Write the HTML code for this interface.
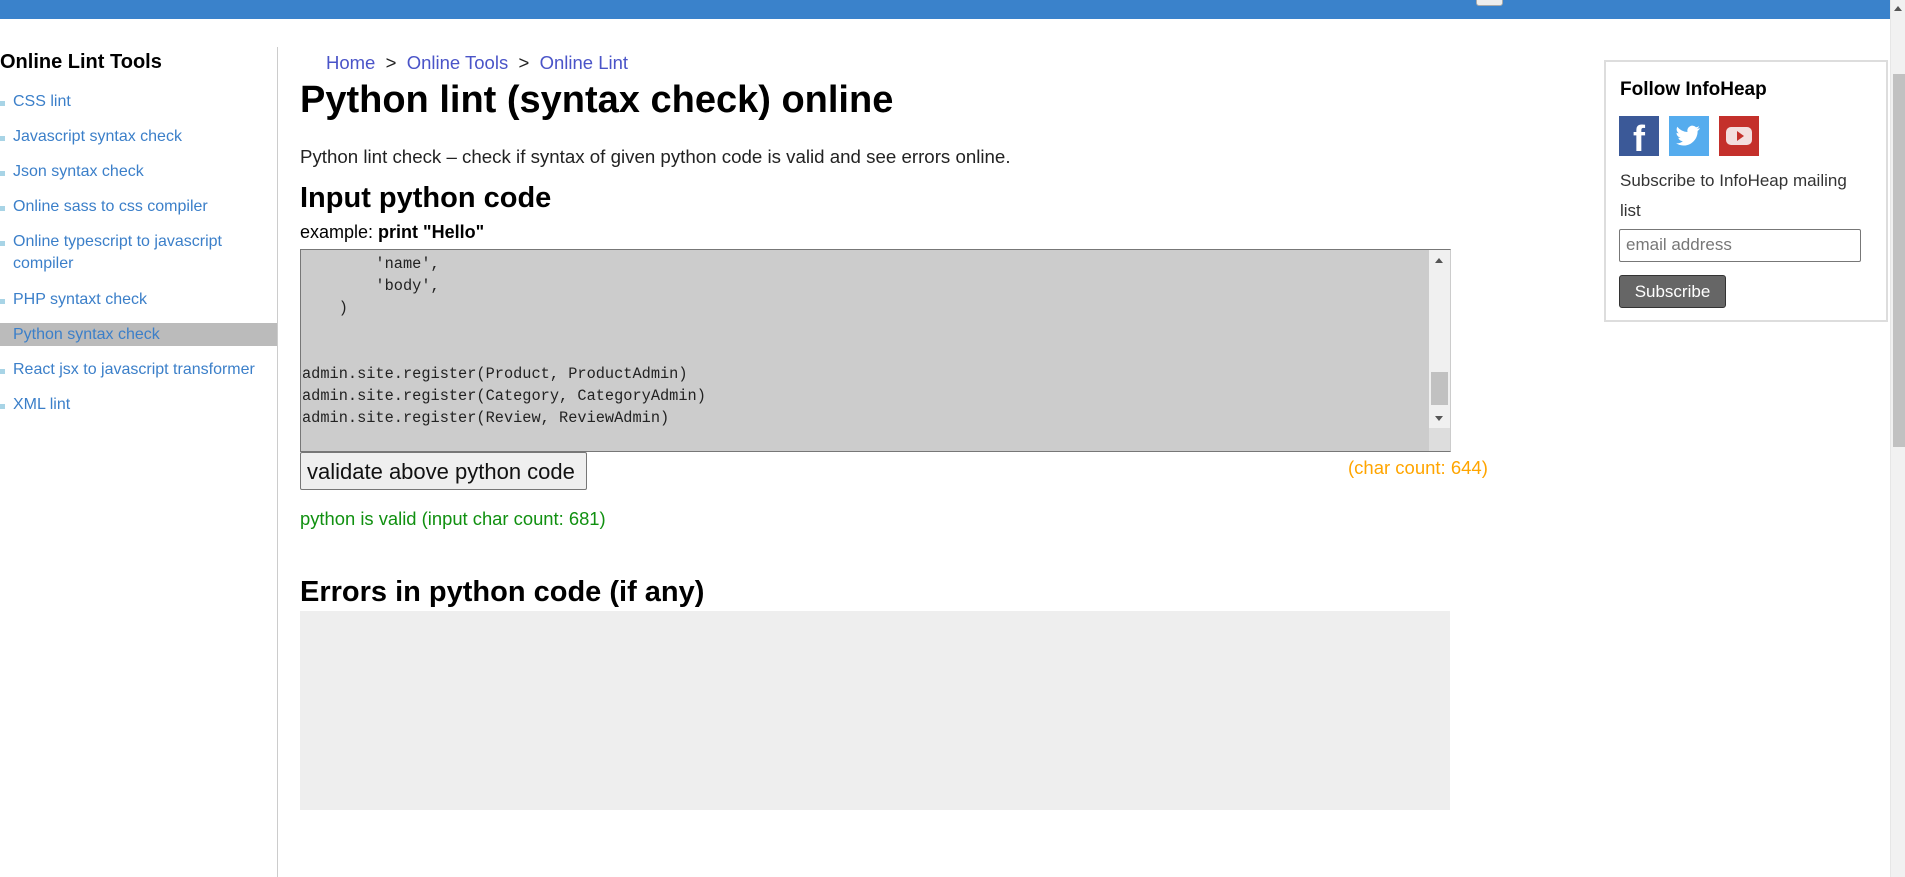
<!DOCTYPE html>
<html><head><meta charset="utf-8"><style>
*{margin:0;padding:0;box-sizing:border-box}
body{width:1905px;height:877px;overflow:hidden;background:#fff;font-family:"Liberation Sans",Arial,sans-serif;position:relative}
.a{position:absolute;white-space:nowrap}
.hdr{left:0;top:0;width:1890px;height:19px;background:#3a82cb}
.hdr span{position:absolute;top:-13px;color:#fff;font-size:16px}
.side{font-size:16px;color:#3b7fc9}
.bul{position:absolute;width:5px;height:5px;background:#a8d4e6}
.mono{font-family:"Liberation Mono","DejaVu Sans Mono",monospace;font-size:15.3px;color:#222}
</style></head><body>
<div class="a hdr"><span style="left:23px">Home</span><span style="left:127px">Tutorials</span><span style="left:245px">Online Tools</span>
<div style="position:absolute;left:1476px;top:-6px;width:27px;height:12px;background:#eee;border-radius:3px;border:1px solid #aaa"></div></div>

<div class="a" style="left:0;top:51px;font-size:20px;font-weight:bold;color:#000">Online Lint Tools</div>
<div class="a" style="left:0;top:323px;width:277px;height:23px;background:#bbb"></div>
<div class="a" style="left:277px;top:47px;width:1px;height:830px;background:#ccc"></div>

<div class="bul" style="left:0;top:101px"></div><div class="a side" style="left:13px;top:93px">CSS lint</div>
<div class="bul" style="left:0;top:136px"></div><div class="a side" style="left:13px;top:128px">Javascript syntax check</div>
<div class="bul" style="left:0;top:171px"></div><div class="a side" style="left:13px;top:163px">Json syntax check</div>
<div class="bul" style="left:0;top:206px"></div><div class="a side" style="left:13px;top:198px">Online sass to css compiler</div>
<div class="bul" style="left:0;top:241px"></div><div class="a side" style="left:13px;top:231px;line-height:22px">Online typescript to javascript<br>compiler</div>
<div class="bul" style="left:0;top:299px"></div><div class="a side" style="left:13px;top:291px">PHP syntaxt check</div>
<div class="a side" style="left:13px;top:326px">Python syntax check</div>
<div class="bul" style="left:0;top:369px"></div><div class="a side" style="left:13px;top:361px">React jsx to javascript transformer</div>
<div class="bul" style="left:0;top:404px"></div><div class="a side" style="left:13px;top:396px">XML lint</div>

<div class="a" style="left:326px;top:52px;font-size:18.5px;color:#4a54c8">Home <span style="color:#222">&nbsp;&gt;&nbsp;</span> Online Tools <span style="color:#222">&nbsp;&gt;&nbsp;</span> Online Lint</div>
<div class="a" style="left:300px;top:79px;font-size:38px;font-weight:bold;color:#000">Python lint (syntax check) online</div>
<div class="a" style="left:300px;top:146px;font-size:18.7px;color:#222">Python lint check – check if syntax of given python code is valid and see errors online.</div>
<div class="a" style="left:300px;top:182px;font-size:29px;font-weight:bold;color:#000">Input python code</div>
<div class="a" style="left:300px;top:222px;font-size:18px;color:#000">example: <b>print "Hello"</b></div>

<div class="a" style="left:300px;top:249px;width:1151px;height:203px;background:#ccc;border:1px solid #777;border-right-color:#ccc;overflow:hidden">
<div class="mono" style="position:absolute;left:1px;top:3px;line-height:22px;white-space:pre">        'name',
        'body',
    )


admin.site.register(Product, ProductAdmin)
admin.site.register(Category, CategoryAdmin)
admin.site.register(Review, ReviewAdmin)</div>
<div style="position:absolute;right:0;top:0;width:21px;height:201px;background:#f0f0f0">
<div style="position:absolute;left:6px;top:8px;border:4px solid transparent;border-bottom:5px solid #555;border-top:0"></div>
<div style="position:absolute;left:2px;top:122px;width:17px;height:33px;background:#c1c1c1"></div>
<div style="position:absolute;left:6px;top:166px;border:4px solid transparent;border-top:5px solid #555;border-bottom:0"></div>
<div style="position:absolute;left:0;top:178px;width:21px;height:23px;background:#ddd"></div>
</div></div>

<div class="a" style="left:300px;top:452px;width:287px;height:38px;background:#efefef;border:1px solid #777;border-radius:2px;font-size:22px;color:#111;padding:6px 0 0 6px">validate above python code</div>
<div class="a" style="left:1348px;top:457px;font-size:18.5px;color:#ffa500">(char count: 644)</div>
<div class="a" style="left:300px;top:508px;font-size:18.4px;color:#109010">python is valid (input char count: 681)</div>
<div class="a" style="left:300px;top:576px;font-size:29px;font-weight:bold;color:#000">Errors in python code (if any)</div>
<div class="a" style="left:300px;top:611px;width:1150px;height:199px;background:#eee"></div>

<div class="a" style="left:1604px;top:60px;width:284px;height:262px;border:2px solid #ddd"></div>
<div class="a" style="left:1620px;top:79px;font-size:19px;font-weight:bold;color:#000">Follow InfoHeap</div>
<div class="a" style="left:1619px;top:116px;width:40px;height:40px;background:#3b5998;color:#fff;font-size:36px;font-weight:bold;text-align:center;line-height:46px">f</div>
<div class="a" style="left:1669px;top:116px;width:40px;height:40px;background:#55acee">
<svg width="40" height="40" viewBox="0 0 40 40"><path d="M31 12c-1 .5-2 .7-3 .8 1-.6 1.8-1.6 2.2-2.7-1 .6-2 1-3.2 1.2A5 5 0 0 0 18.5 16 14 14 0 0 1 8.3 10.8a5 5 0 0 0 1.5 6.6c-.8 0-1.6-.3-2.3-.6 0 2.4 1.7 4.4 4 4.9-.7.2-1.500.2-2.2.1.6 2 2.5 3.4 4.6 3.4A10 10 0 0 1 7 27.3 14 14 0 0 0 28.6 15.5V15c1-.7 1.8-1.6 2.4-3z" fill="#fff"/></svg></div>
<div class="a" style="left:1719px;top:116px;width:40px;height:40px;background:#c4302b">
<div style="position:absolute;left:7px;top:11px;width:26px;height:18px;background:#f3dede;border-radius:5px"></div>
<div style="position:absolute;left:18px;top:15px;border-left:7px solid #c4302b;border-top:5px solid transparent;border-bottom:5px solid transparent"></div></div>
<div class="a" style="left:1620px;top:166px;font-size:17px;color:#333;line-height:30px">Subscribe to InfoHeap mailing<br>list</div>
<div class="a" style="left:1619px;top:229px;width:242px;height:33px;border:1px solid #777;border-radius:2px;font-size:17px;color:#777;padding:5px 0 0 6px">email address</div>
<div class="a" style="left:1619px;top:275px;width:107px;height:33px;background:#666;border:1px solid #333;border-radius:3px;color:#fff;font-size:17px;text-align:center;line-height:31px">Subscribe</div>

<div class="a" style="left:1890px;top:0;width:15px;height:877px;background:#f1f1f1;border-left:1px solid #e6e6e6">
<div style="position:absolute;left:3px;top:6px;border:4px solid transparent;border-bottom:5px solid #555;border-top:0"></div>
<div style="position:absolute;left:2px;top:74px;width:12px;height:373px;background:#c1c1c1"></div></div>
</body></html>
